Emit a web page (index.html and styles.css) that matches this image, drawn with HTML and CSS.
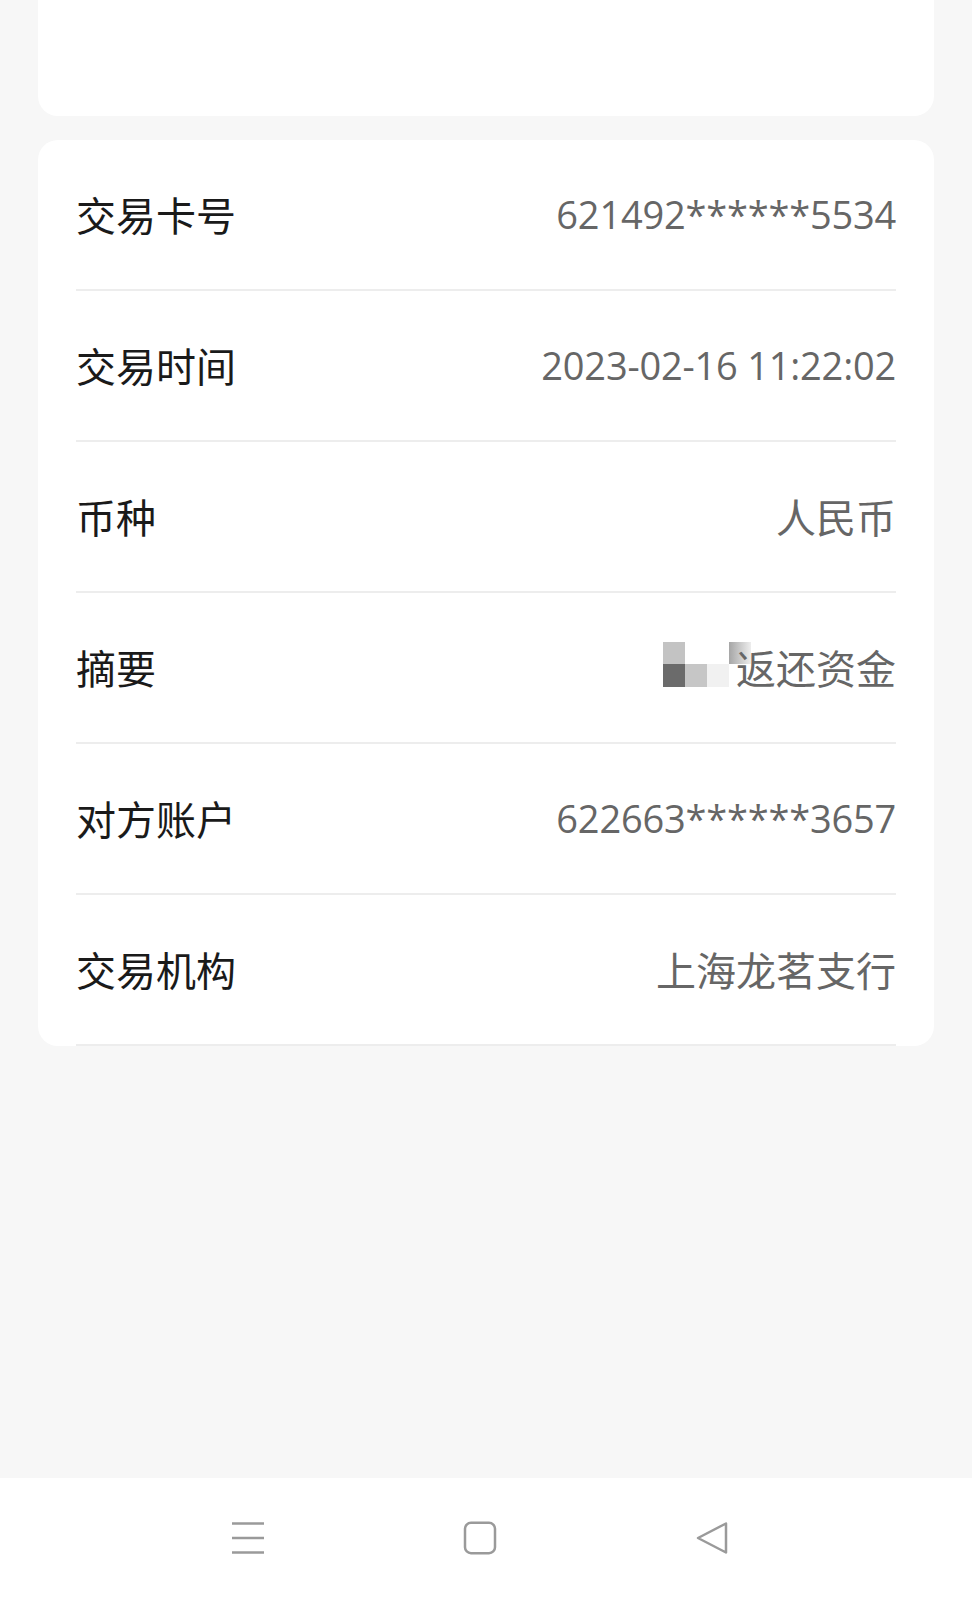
FILE: index.html
```html
<!DOCTYPE html>
<html lang="zh-CN">
<head>
    <meta charset="UTF-8">
    <meta name="viewport" content="width=device-width, initial-scale=1.0">
    <title>交易详情</title>
    <link rel="stylesheet" href="styles.css">
</head>
<body>
    <div class="page">
        <div class="card card-top"></div>

        <div class="card detail">
            <div class="row">
                <span class="label">交易卡号</span>
                <span class="value num">621492******5534</span>
            </div>
            <div class="row">
                <span class="label">交易时间</span>
                <span class="value num">2023-02-16 11:22:02</span>
            </div>
            <div class="row">
                <span class="label">币种</span>
                <span class="value">人民币</span>
            </div>
            <div class="row">
                <span class="label">摘要</span>
                <span class="value">
                    <span class="mosaic">
                        <i class="m1"></i><i class="m0"></i><i class="m0"></i><i class="m2"></i>
                        <i class="m3"></i><i class="m4"></i><i class="m5"></i><i class="m0"></i>
                    </span>返还资金
                </span>
            </div>
            <div class="row">
                <span class="label">对方账户</span>
                <span class="value num">622663******3657</span>
            </div>
            <div class="row">
                <span class="label">交易机构</span>
                <span class="value">上海龙茗支行</span>
            </div>
        </div>
    </div>

    <div class="navbar">
        <svg class="nav-icon" viewBox="0 0 34 34">
            <path d="M1 2.5H33M1 17H33M1 31.5H33" stroke="#9a9a9a" stroke-width="2.6" fill="none"/>
        </svg>
        <svg class="nav-icon" viewBox="0 0 34 34">
            <rect x="2" y="1.8" width="30" height="30.4" rx="6" stroke="#9a9a9a" stroke-width="2.5" fill="none"/>
        </svg>
        <svg class="nav-icon" viewBox="0 0 34 34">
            <path d="M31 2.5L3 17L31 31.5Z" stroke="#9a9a9a" stroke-width="2.5" stroke-linejoin="round" fill="none"/>
        </svg>
    </div>
</body>
</html>
```

FILE: styles.css
```css
body {
    margin: 0;
    background-color: #f7f7f7;
    font-family: "Noto Sans CJK SC", sans-serif;
    display: flex;
    flex-direction: column;
    min-height: 100vh;
}
.page {
    flex: 1;
    padding: 0 38px;
}
.card {
    background-color: #fff;
    border-radius: 20px;
}
.card-top {
    height: 116px;
    border-radius: 0 0 20px 20px;
    margin-bottom: 24px;
}
.detail {
    padding: 0 38px;
    overflow: hidden;
}
.row {
    display: flex;
    justify-content: space-between;
    align-items: center;
    height: 148px;
    padding-bottom: 1px;
    border-bottom: 2px solid #ededed;
}
.label {
    font-size: 40px;
    color: #1a1a1a;
    white-space: nowrap;
}
.value {
    font-size: 40px;
    color: #666;
    display: flex;
    align-items: center;
    white-space: nowrap;
}
.value.num {
    font-family: "Open Sans", sans-serif;
    font-size: 38px;
    letter-spacing: -0.2px;
}
.mosaic {
    display: grid;
    grid-template-columns: repeat(4, 22px);
    grid-template-rows: repeat(2, 22.5px);
    margin-right: -15px;
    margin-top: -6px;
}
.mosaic i {
    display: block;
}
.m0 { background-color: transparent; }
.m1 { background-color: #c3c3c3; }
.m2 { background: linear-gradient(to right, #a6a6a6, rgba(166, 166, 166, 0.2)); }
.m3 { background-color: #6b6b6b; }
.m4 { background-color: #c6c6c6; }
.m5 { background-color: #f1f1f1; }
.navbar {
    height: 119px;
    background-color: #fff;
    display: flex;
    justify-content: center;
    align-items: center;
    gap: 198px;
    padding-right: 12px;
}
.nav-icon {
    width: 34px;
    height: 34px;
}
```
